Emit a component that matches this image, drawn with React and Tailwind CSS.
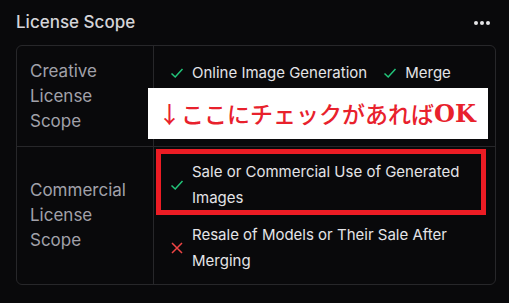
import React from "react";

const Check = () => (
  <svg width="14" height="14" viewBox="0 0 14 14" fill="none" className="shrink-0">
    <path d="M1.5 7.5 L5.2 11 L12.5 3" stroke="#22c57a" strokeWidth="1.5" />
  </svg>
);

const Cross = () => (
  <svg width="14" height="14" viewBox="0 0 14 14" fill="none" className="shrink-0">
    <path d="M2 2 L12 12 M12 2 L2 12" stroke="#ef4444" strokeWidth="1.5" />
  </svg>
);

export default function App() {
  return (
    <div
      className="w-[509px] h-[303px] bg-[#09090b] px-4 pt-[10px]"
      style={{ fontFamily: "Inter, 'Noto Sans', sans-serif" }}
    >
      <div className="flex items-center justify-between h-[26px]">
        <div className="text-[17px] text-[#d4d4d8] font-medium">License Scope</div>
        <div className="flex gap-[2px] mr-[3px]">
          <span className="w-[4px] h-[4px] rounded-full bg-[#e4e4e7]" />
          <span className="w-[4px] h-[4px] rounded-full bg-[#e4e4e7]" />
          <span className="w-[4px] h-[4px] rounded-full bg-[#e4e4e7]" />
        </div>
      </div>
      <div className="relative mt-[9px] w-[480px] border border-[#27272a] rounded-md">
        <div className="flex h-[101px] border-b border-[#27272a]">
          <div className="w-[137px] border-r border-[#27272a] pl-[13px] flex flex-col justify-center text-[17px] leading-[25px] text-[#a1a1aa]">
            <div>Creative</div>
            <div>License</div>
            <div>Scope</div>
          </div>
          <div className="flex-1 pl-[16px] pt-[14px] text-[15px] leading-[26px] text-[#e4e4e7] flex gap-[16px] items-start">
            <div className="flex items-center gap-[8px]">
              <Check />
              <span>Online Image Generation</span>
            </div>
            <div className="flex items-center gap-[8px]">
              <Check />
              <span>Merge</span>
            </div>
          </div>
        </div>
        <div className="flex h-[137px]">
          <div className="w-[137px] border-r border-[#27272a] pl-[13px] flex flex-col justify-center text-[17px] leading-[25px] text-[#a1a1aa]">
            <div>Commercial</div>
            <div>License</div>
            <div>Scope</div>
          </div>
          <div className="flex-1 pl-[16px] pt-[12px] text-[15px] leading-[26px] text-[#e4e4e7] flex flex-col gap-[11px]">
            <div className="flex items-center gap-[8px]">
              <Check />
              <span className="w-[285px]">Sale or Commercial Use of Generated Images</span>
            </div>
            <div className="flex items-center gap-[8px]">
              <Cross />
              <span className="w-[285px]">Resale of Models or Their Sale After Merging</span>
            </div>
          </div>
        </div>

        <div className="absolute left-[131px] top-[42px] w-[340px] h-[51px] bg-white flex items-center pl-[10px] text-[#e8212c]">
          <span className="text-[23px] font-medium" style={{ fontFamily: "'Noto Sans CJK JP', sans-serif" }}>
            ↓ここにチェックがあれば
          </span>
          <span className="text-[24px] font-black" style={{ fontFamily: "'DejaVu Serif', serif" }}>OK</span>
        </div>
        <div className="absolute left-[139px] top-[103px] w-[330px] h-[66px] border-[5px] border-[#ec1c24]" />
      </div>
    </div>
  );
}
